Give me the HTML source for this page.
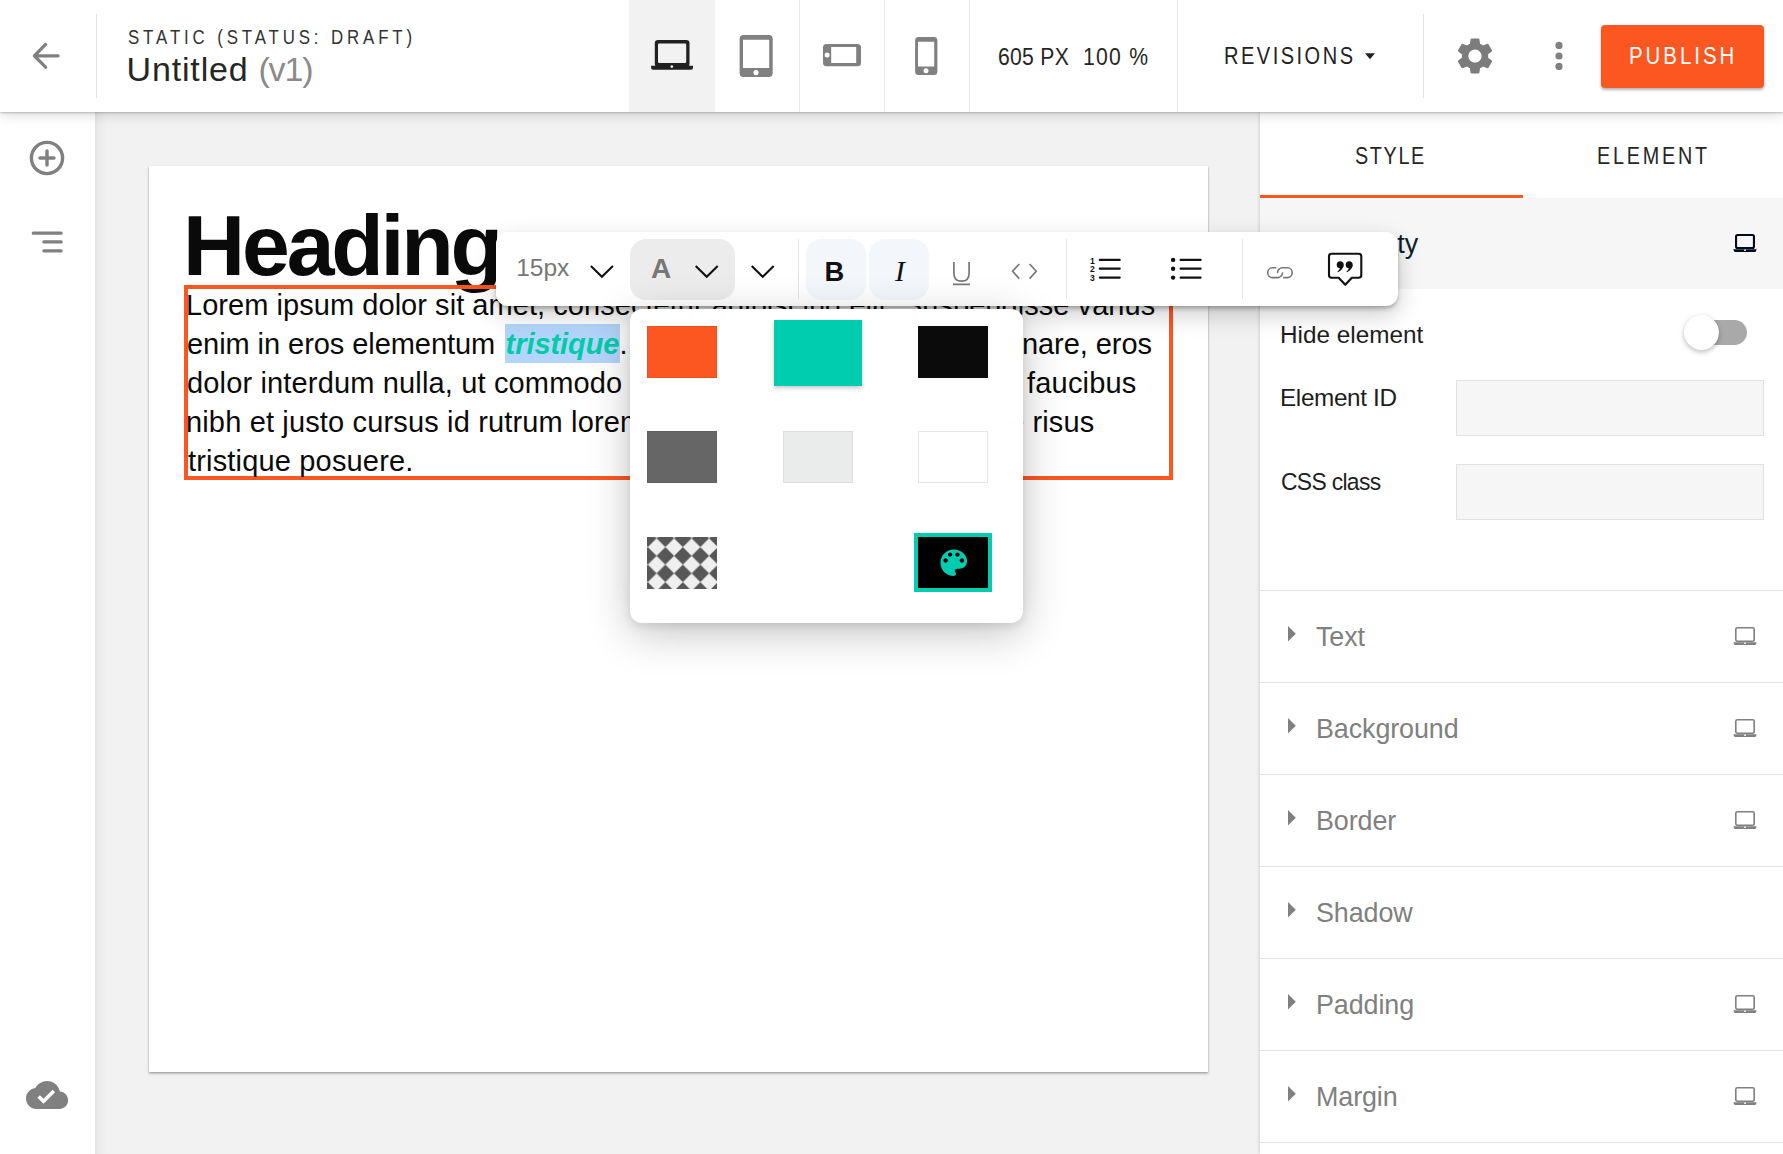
<!DOCTYPE html>
<html><head><meta charset="utf-8"><title>Editor</title>
<style>
html,body{margin:0;padding:0;width:1783px;height:1154px;overflow:hidden;background:#fff;}
body{position:relative;font-family:"Liberation Sans", sans-serif;}
.t{position:absolute;white-space:nowrap;line-height:0;}
.r{position:absolute;box-sizing:border-box;}
svg{position:absolute;overflow:visible;}
</style></head><body>
<div class="r" style="left:95px;top:112px;width:1165px;height:1042px;background:#f2f2f2;"></div>
<div class="r" style="left:95px;top:112px;width:15px;height:1042px;background:linear-gradient(to right,#e3e3e3,#eaeaea 20%,#eeeeee 45%,#f1f1f1 75%,#f2f2f2);"></div>
<div class="r" style="left:149px;top:166px;width:1059px;height:906px;background:#fff;box-shadow:0 1px 2px rgba(0,0,0,.3),0 2px 3px rgba(0,0,0,.12);"></div>
<div class="t" style="left:183.10px;top:245.30px;font-size:86px;color:#0a0a0a;font-weight:bold;letter-spacing:-3.2px;">Heading</div>
<div class="r" style="left:184px;top:285px;width:989px;height:195px;border:4px solid #fc5621;"></div>
<div class="r" style="left:505px;top:324px;width:115px;height:39px;background:#b4d5fb;"></div>
<div class="t" style="left:186.00px;top:304.75px;font-size:29px;color:#0a0a0a;letter-spacing:0.05px;">Lorem ipsum dolor sit amet, consectetur adipiscing elit. Suspendisse varius</div>
<div class="t" style="left:187.00px;top:343.75px;font-size:29px;color:#0a0a0a;letter-spacing:-0.06px;">enim in eros elementum <span style="letter-spacing:0">&#8202;</span><b style="font-style:italic;color:#00cba9">tristique</b>. Duis cursus, mi quis viverra ornare, eros</div>
<div class="t" style="left:187.00px;top:382.75px;font-size:29px;color:#0a0a0a;letter-spacing:0.155px;">dolor interdum nulla, ut commodo diam libero vitae erat. Aenean faucibus</div>
<div class="t" style="left:186.00px;top:421.75px;font-size:29px;color:#0a0a0a;letter-spacing:0.15px;">nibh et justo cursus id rutrum lorem imperdiet. Nunc ut sem vitae risus</div>
<div class="t" style="left:188.00px;top:460.75px;font-size:29px;color:#0a0a0a;letter-spacing:0.17px;">tristique posuere.</div>
<div class="r" style="left:0px;top:112px;width:95px;height:1042px;background:#fff;"></div>
<svg style="left:0;top:0" width="95" height="1154"><circle cx="47" cy="158" r="15.6" fill="none" stroke="#808080" stroke-width="3.4"/><path d="M40 158H54M47 151V165" stroke="#808080" stroke-width="3.4" stroke-linecap="round" fill="none"/><path d="M33.3 233.2H61.1M43.9 241.9H61.1M43.9 250.8H61.1" stroke="#808080" stroke-width="3.3" stroke-linecap="round" fill="none"/></svg>
<svg style="left:26px;top:1074px" width="42.1" height="42.1" viewBox="0 0 24 24"><path fill-rule="evenodd" fill="#808080" d="M19.35 10.04C18.67 6.59 15.64 4 12 4 9.11 4 6.6 5.64 5.35 8.04 2.34 8.36 0 10.91 0 14c0 3.31 2.69 6 6 6h13c2.76 0 5-2.24 5-5 0-2.64-2.05-4.78-4.65-4.96zM10 17l-3.5-3.5 1.41-1.41L10 14.17 15.18 9l1.41 1.41L10 17z"/></svg>
<div class="r" style="left:1260px;top:112px;width:523px;height:1042px;background:#fff;box-shadow:-1px 0 3px rgba(0,0,0,.13);"></div>
<div class="t" style="left:1355.14px;top:155.93px;font-size:23px;color:#262626;letter-spacing:1.92px;transform:scaleX(0.86);transform-origin:0 0;">STYLE</div>
<div class="t" style="left:1597.48px;top:156.03px;font-size:23px;color:#262626;letter-spacing:3.25px;transform:scaleX(0.86);transform-origin:0 0;">ELEMENT</div>
<div class="r" style="left:1260px;top:195px;width:263px;height:3px;background:#fc5621;"></div>
<div class="r" style="left:1260px;top:198px;width:523px;height:91px;background:#f6f6f6;"></div>
<div class="t" style="left:1317.00px;top:243.68px;font-size:26.9px;color:#0f1e2d;">Visibili</div>
<div class="t" style="left:1397.20px;top:243.68px;font-size:26.9px;color:#0f1e2d;">ty</div>
<svg style="left:1733.2px;top:233.9px" width="24" height="19" viewBox="0 0 24 19"><rect x="3.05" y="1.05" width="17.9" height="12.9" rx="1.5" fill="none" stroke="#000c18" stroke-width="2.1"/><path d="M0.3 15.2H23.7L22.8 17.6Q22.5 18 22 18H2Q1.5 18 1.2 17.6Z" fill="#000c18"/><rect x="11" y="15.6" width="2" height="1.2" fill="#fff"/></svg>
<div class="t" style="left:1280.00px;top:334.98px;font-size:24.3px;color:#1e1e1e;">Hide element</div>
<div class="r" style="left:1694px;top:320px;width:53px;height:25px;background:#a9a9a9;border-radius:12.5px;"></div>
<div class="r" style="left:1684px;top:315px;width:35px;height:35px;border-radius:50%;background:#fff;box-shadow:0 2px 5px rgba(0,0,0,.26),0 0 2px rgba(0,0,0,.06);"></div>
<div class="t" style="left:1280.00px;top:398.08px;font-size:24.3px;color:#1e1e1e;letter-spacing:-0.35px;">Element ID</div>
<div class="r" style="left:1456px;top:380px;width:308px;height:56px;background:#f6f6f6;border:1px solid #e2e2e2;"></div>
<div class="t" style="left:1281.00px;top:481.98px;font-size:24.3px;color:#1e1e1e;letter-spacing:-0.7px;transform:scaleX(0.94);transform-origin:0 0;">CSS class</div>
<div class="r" style="left:1456px;top:464px;width:308px;height:56px;background:#f6f6f6;border:1px solid #e2e2e2;"></div>
<div class="r" style="left:1260px;top:590px;width:523px;height:1px;background:#e6e6e6;"></div>
<div class="r" style="left:1260px;top:682px;width:523px;height:1px;background:#e6e6e6;"></div>
<div class="r" style="left:1260px;top:774px;width:523px;height:1px;background:#e6e6e6;"></div>
<div class="r" style="left:1260px;top:866px;width:523px;height:1px;background:#e6e6e6;"></div>
<div class="r" style="left:1260px;top:958px;width:523px;height:1px;background:#e6e6e6;"></div>
<div class="r" style="left:1260px;top:1050px;width:523px;height:1px;background:#e6e6e6;"></div>
<div class="r" style="left:1260px;top:1142px;width:523px;height:1px;background:#e6e6e6;"></div>
<svg style="left:1288px;top:626px" width="8" height="16"><path d="M0 0L7.8 7.8L0 15.6Z" fill="#808080"/></svg>
<div class="t" style="left:1316.00px;top:636.68px;font-size:26.9px;color:#808080;letter-spacing:-0.1px;">Text</div>
<svg style="left:1733.2px;top:627px" width="24" height="19" viewBox="0 0 24 19"><rect x="2.8" y="0.8" width="18.4" height="13.4" rx="1.5" fill="none" stroke="#808080" stroke-width="1.6"/><path d="M0.3 15.2H23.7L22.8 17.6Q22.5 18 22 18H2Q1.5 18 1.2 17.6Z" fill="#808080"/><rect x="11" y="15.6" width="2" height="1.2" fill="#fff"/></svg>
<svg style="left:1288px;top:718px" width="8" height="16"><path d="M0 0L7.8 7.8L0 15.6Z" fill="#808080"/></svg>
<div class="t" style="left:1316.00px;top:728.68px;font-size:26.9px;color:#808080;letter-spacing:-0.1px;">Background</div>
<svg style="left:1733.2px;top:719px" width="24" height="19" viewBox="0 0 24 19"><rect x="2.8" y="0.8" width="18.4" height="13.4" rx="1.5" fill="none" stroke="#808080" stroke-width="1.6"/><path d="M0.3 15.2H23.7L22.8 17.6Q22.5 18 22 18H2Q1.5 18 1.2 17.6Z" fill="#808080"/><rect x="11" y="15.6" width="2" height="1.2" fill="#fff"/></svg>
<svg style="left:1288px;top:810px" width="8" height="16"><path d="M0 0L7.8 7.8L0 15.6Z" fill="#808080"/></svg>
<div class="t" style="left:1316.00px;top:820.68px;font-size:26.9px;color:#808080;letter-spacing:-0.1px;">Border</div>
<svg style="left:1733.2px;top:811px" width="24" height="19" viewBox="0 0 24 19"><rect x="2.8" y="0.8" width="18.4" height="13.4" rx="1.5" fill="none" stroke="#808080" stroke-width="1.6"/><path d="M0.3 15.2H23.7L22.8 17.6Q22.5 18 22 18H2Q1.5 18 1.2 17.6Z" fill="#808080"/><rect x="11" y="15.6" width="2" height="1.2" fill="#fff"/></svg>
<svg style="left:1288px;top:902px" width="8" height="16"><path d="M0 0L7.8 7.8L0 15.6Z" fill="#808080"/></svg>
<div class="t" style="left:1316.00px;top:912.68px;font-size:26.9px;color:#808080;letter-spacing:-0.1px;">Shadow</div>
<svg style="left:1288px;top:994px" width="8" height="16"><path d="M0 0L7.8 7.8L0 15.6Z" fill="#808080"/></svg>
<div class="t" style="left:1316.00px;top:1004.68px;font-size:26.9px;color:#808080;letter-spacing:-0.1px;">Padding</div>
<svg style="left:1733.2px;top:995px" width="24" height="19" viewBox="0 0 24 19"><rect x="2.8" y="0.8" width="18.4" height="13.4" rx="1.5" fill="none" stroke="#808080" stroke-width="1.6"/><path d="M0.3 15.2H23.7L22.8 17.6Q22.5 18 22 18H2Q1.5 18 1.2 17.6Z" fill="#808080"/><rect x="11" y="15.6" width="2" height="1.2" fill="#fff"/></svg>
<svg style="left:1288px;top:1086px" width="8" height="16"><path d="M0 0L7.8 7.8L0 15.6Z" fill="#808080"/></svg>
<div class="t" style="left:1316.00px;top:1096.68px;font-size:26.9px;color:#808080;letter-spacing:-0.1px;">Margin</div>
<svg style="left:1733.2px;top:1087px" width="24" height="19" viewBox="0 0 24 19"><rect x="2.8" y="0.8" width="18.4" height="13.4" rx="1.5" fill="none" stroke="#808080" stroke-width="1.6"/><path d="M0.3 15.2H23.7L22.8 17.6Q22.5 18 22 18H2Q1.5 18 1.2 17.6Z" fill="#808080"/><rect x="11" y="15.6" width="2" height="1.2" fill="#fff"/></svg>
<div class="r" style="left:0px;top:0px;width:1783px;height:112px;background:#fff;box-shadow:0 1px 2px rgba(0,0,0,.22),0 3px 12px rgba(0,0,0,.14);z-index:5;"></div>
<div style="position:absolute;left:0;top:0;width:1783px;height:112px;z-index:6;">
<svg style="left:0;top:0" width="100" height="112"><path d="M35 55.8H58.1M45.6 44.4L34.4 55.8L45.6 67.2" stroke="#808080" stroke-width="3.3" stroke-linecap="round" stroke-linejoin="round" fill="none"/></svg>
<div class="r" style="left:96px;top:14px;width:1px;height:84px;background:#e3e3e3;"></div>
<div class="t" style="left:127.54px;top:36.81px;font-size:19.6px;color:#333;letter-spacing:4.5px;transform:scaleX(0.86);transform-origin:0 0;">STATIC (STATUS: DRAFT)</div>
<div class="t" style="left:126.50px;top:68.82px;font-size:34px;color:#262626;letter-spacing:0.85px;">Untitled</div>
<div class="t" style="left:258.50px;top:68.82px;font-size:34px;color:#8a8a8a;letter-spacing:-1.2px;">(v1)</div>
<div class="r" style="left:629px;top:0px;width:86px;height:112px;background:#f2f2f2;"></div>
<div class="r" style="left:799px;top:0px;width:1px;height:112px;background:#ececec;"></div>
<div class="r" style="left:884px;top:0px;width:1px;height:112px;background:#ececec;"></div>
<div class="r" style="left:969px;top:0px;width:1px;height:112px;background:#ececec;"></div>
<div class="r" style="left:1177px;top:0px;width:1px;height:112px;background:#ececec;"></div>
<svg style="left:0;top:0" width="1000" height="112"><path d="M658.0999999999999 40H686.2Q689.5 40 689.5 43.3V63.7Q689.5 67 686.2 67H658.0999999999999Q654.8 67 654.8 63.7V43.3Q654.8 40 658.0999999999999 40ZM659.2 43.5H685.0Q686.2 43.5 686.2 44.7V61.8Q686.2 63 685.0 63H659.2Q658 63 658 61.8V44.7Q658 43.5 659.2 43.5Z" fill="#222" fill-rule="evenodd"/><path d="M651.1 65.7H693V67.7Q693 69.7 691 69.7H653.1Q651.1 69.7 651.1 67.7Z" fill="#222"/><circle cx="671.8" cy="66.6" r="1.3" fill="#f2f2f2"/><path d="M743.6 34.9H768.7Q772.7 34.9 772.7 38.9V73Q772.7 77 768.7 77H743.6Q739.6 77 739.6 73V38.9Q739.6 34.9 743.6 34.9ZM743.1 39.8H769.1Q769.2 39.8 769.2 39.9V68.0Q769.2 68.1 769.1 68.1H743.1Q743 68.1 743 68.0V39.9Q743 39.8 743.1 39.8Z" fill="#808080" fill-rule="evenodd"/><circle cx="756" cy="72.6" r="2.6" fill="#fff"/><path d="M826.5 44H857.5Q861 44 861 47.5V62.8Q861 66.3 857.5 66.3H826.5Q823 66.3 823 62.8V47.5Q823 44 826.5 44ZM831.3000000000001 46.9H856.1Q856.2 46.9 856.2 47.0V62.9Q856.2 63 856.1 63H831.3000000000001Q831.2 63 831.2 62.9V47.0Q831.2 46.9 831.3000000000001 46.9Z" fill="#808080" fill-rule="evenodd"/><circle cx="827.1" cy="55" r="2.5" fill="#fff"/><path d="M918.6 36.9H933.9Q937.4 36.9 937.4 40.4V71.4Q937.4 74.9 933.9 74.9H918.6Q915.1 74.9 915.1 71.4V40.4Q915.1 36.9 918.6 36.9ZM918.1 41.8H934.1Q934.2 41.8 934.2 41.9V66.4Q934.2 66.5 934.1 66.5H918.1Q918 66.5 918 66.4V41.9Q918 41.8 918.1 41.8Z" fill="#808080" fill-rule="evenodd"/><circle cx="926" cy="70.8" r="2.5" fill="#fff"/></svg>
<div class="t" style="left:997.58px;top:57.03px;font-size:23px;color:#262626;letter-spacing:0.3px;transform:scaleX(0.92);transform-origin:0 0;">605 PX</div>
<div class="t" style="left:1083.06px;top:57.03px;font-size:23px;color:#262626;letter-spacing:1.37px;transform:scaleX(0.92);transform-origin:0 0;">100 %</div>
<div class="t" style="left:1223.88px;top:55.93px;font-size:23.3px;color:#222;letter-spacing:2.89px;transform:scaleX(0.86);transform-origin:0 0;">REVISIONS</div>
<svg style="left:1365px;top:53px" width="11" height="7"><path d="M0 0.3H10L5 6.3Z" fill="#222"/></svg>
<div class="r" style="left:1423px;top:14px;width:1px;height:84px;background:#e3e3e3;"></div>
<svg style="left:1453px;top:34px" width="44" height="44" viewBox="0 0 24 24"><path d="M19.14,12.94c0.04-0.3,0.06-0.61,0.06-0.94c0-0.32-0.02-0.64-0.07-0.94l2.03-1.58c0.18-0.14,0.23-0.41,0.12-0.61 l-1.92-3.32c-0.12-0.22-0.37-0.29-0.59-0.22l-2.39,0.96c-0.5-0.38-1.03-0.7-1.62-0.94L14.4,2.81c-0.04-0.24-0.24-0.41-0.48-0.41 h-3.84c-0.24,0-0.43,0.17-0.47,0.41L9.25,5.35C8.66,5.59,8.12,5.92,7.63,6.29L5.24,5.33c-0.22-0.08-0.47,0-0.59,0.22L2.74,8.87 C2.62,9.08,2.66,9.34,2.86,9.48l2.03,1.58C4.84,11.36,4.8,11.69,4.8,12s0.02,0.64,0.07,0.94l-2.03,1.58 c-0.18,0.14-0.23,0.41-0.12,0.61l1.92,3.32c0.12,0.22,0.37,0.29,0.59,0.22l2.39-0.96c0.5,0.38,1.03,0.7,1.62,0.94l0.36,2.54 c0.05,0.24,0.24,0.41,0.48,0.41h3.84c0.24,0,0.44-0.17,0.47-0.41l0.36-2.54c0.59-0.24,1.13-0.56,1.62-0.94l2.39,0.96 c0.22,0.08,0.47,0,0.59-0.22l1.92-3.32c0.12-0.22,0.07-0.47-0.12-0.61L19.14,12.94z M12,15.6c-1.98,0-3.6-1.62-3.6-3.6 s1.62-3.6,3.6-3.6s3.6,1.62,3.6,3.6S13.98,15.6,12,15.6z" fill="#7c7c7c"/></svg>
<svg style="left:1550px;top:38px" width="20" height="36"><circle cx="9" cy="7.4" r="3.6" fill="#808080"/><circle cx="9" cy="18" r="3.6" fill="#808080"/><circle cx="9" cy="28.4" r="3.6" fill="#808080"/></svg>
<div class="r" style="left:1601px;top:25px;width:163px;height:63px;background:#fc5621;border-radius:4px;box-shadow:0 2px 3px rgba(0,0,0,.3);"></div>
<div class="t" style="left:1628.88px;top:55.69px;font-size:23.7px;color:#fff;letter-spacing:3.49px;transform:scaleX(0.86);transform-origin:0 0;">PUBLISH</div>
</div>
<div class="r" style="left:629.7px;top:308.6px;width:393.3px;height:314.4px;background:#fff;border-radius:12px;box-shadow:0 3px 8px rgba(0,0,0,.1),0 10px 44px rgba(0,0,0,.24);z-index:22;"></div>
<div style="position:absolute;left:0;top:0;z-index:23;">
<div class="r" style="left:647px;top:326px;width:70px;height:52px;background:#fc5621;border:1px solid rgba(0,0,0,.06);"></div>
<div class="r" style="left:774px;top:319.5px;width:87.5px;height:66.5px;background:#00cdb0;box-shadow:0 2px 4px rgba(0,0,0,.22);"></div>
<div class="r" style="left:918px;top:326px;width:70px;height:52px;background:#0b0b0b;"></div>
<div class="r" style="left:647px;top:431px;width:70px;height:52px;background:#666;border:1px solid rgba(0,0,0,.06);"></div>
<div class="r" style="left:782.7px;top:431px;width:70.29999999999995px;height:52px;background:#eaebeb;border:1px solid #dedede;"></div>
<div class="r" style="left:918px;top:431px;width:70px;height:52px;background:#fff;border:1px solid #e6e6e6;"></div>
<svg style="left:647px;top:536.5px" width="70" height="52" viewBox="647 536.5 70 52"><defs><pattern id="chk" patternUnits="userSpaceOnUse" x="647.85" y="537.85" width="17.5" height="17.5"><rect width="17.5" height="17.5" fill="#575757"/><path d="M8.75 0L17.5 8.75L8.75 17.5L0 8.75Z" fill="#efefef"/></pattern></defs><rect x="647" y="536.5" width="70" height="52" fill="url(#chk)"/></svg>
<div class="r" style="left:914px;top:532.5px;width:77.5px;height:59.5px;background:#00cdb0;"></div>
<div class="r" style="left:918px;top:536.5px;width:69.5px;height:51.5px;background:#000;"></div>
<svg style="left:935.8px;top:545.1px" width="35.5" height="35.5" viewBox="0 0 24 24"><path d="M12 3c-4.97 0-9 4.03-9 9s4.03 9 9 9c.83 0 1.5-.67 1.5-1.5 0-.39-.15-.74-.39-1.01-.23-.26-.38-.61-.38-.99 0-.83.67-1.5 1.5-1.5H16c2.76 0 5-2.24 5-5 0-4.42-4.03-8-9-8zm-5.5 9c-.83 0-1.5-.67-1.5-1.5S5.67 9 6.5 9 8 9.67 8 10.5 7.33 12 6.5 12zm3-4C8.67 8 8 7.33 8 6.5S8.67 5 9.5 5s1.5.67 1.5 1.5S10.33 8 9.5 8zm5 0c-.83 0-1.5-.67-1.5-1.5S13.67 5 14.5 5s1.5.67 1.5 1.5S15.33 8 14.5 8zm3 4c-.83 0-1.5-.67-1.5-1.5S16.67 9 17.5 9s1.5.67 1.5 1.5-.67 1.5-1.5 1.5z" fill="#00cdb0"/></svg>
</div>
<div class="r" style="left:496px;top:231.5px;width:901.5px;height:74.5px;background:#fff;border-radius:12px;box-shadow:0 3px 5px -1px rgba(0,0,0,.32),0 9px 24px rgba(0,0,0,.2);z-index:20;"></div>
<div style="position:absolute;left:0;top:0;z-index:21;">
<div class="t" style="left:516.20px;top:268.21px;font-size:24.5px;color:#777;">15px</div>
<div class="r" style="left:630px;top:238.5px;width:105px;height:61.0px;background:#ececec;border-radius:16px;"></div>
<div class="r" style="left:806px;top:238.5px;width:59.60000000000002px;height:61.0px;background:#f3f6fb;border-radius:16px;"></div>
<div class="r" style="left:869px;top:238.5px;width:59.700000000000045px;height:61.0px;background:#f3f6fb;border-radius:16px;"></div>
<div class="r" style="left:798px;top:239px;width:1px;height:60px;background:#e6e6e6;"></div>
<div class="r" style="left:1066px;top:239px;width:1px;height:60px;background:#e6e6e6;"></div>
<div class="r" style="left:1242px;top:239px;width:1px;height:60px;background:#e6e6e6;"></div>
<div class="t" style="left:650.90px;top:268.70px;font-size:28px;color:#777;font-weight:bold;">A</div>
<div class="t" style="left:824.60px;top:271.84px;font-size:27.3px;color:#111;font-weight:bold;">B</div>
<div class="t" style="left:894.90px;top:271.34px;font-size:29.5px;color:#111;font-style:italic;font-family:'Liberation Serif', serif;">I</div>
<svg style="left:0;top:0" width="1400" height="320"><path d="M590.9 266L601.9 276.7L612.9 266" stroke="#111" stroke-width="2.1" fill="none"/><path d="M695.7 266L706.7 276.7L717.7 266" stroke="#111" stroke-width="2.1" fill="none"/><path d="M751.7 266L762.7 276.7L773.7 266" stroke="#111" stroke-width="2.1" fill="none"/><path d="M953.9 262V273.5Q953.9 281.2 961.5 281.2Q969.1 281.2 969.1 273.5V262M953 284.3H970" stroke="#777" stroke-width="1.7" fill="none"/><path d="M1019.2 264L1012.6 271.3L1019.2 278.6M1029.6 264L1036.2 271.3L1029.6 278.6" stroke="#777" stroke-width="1.7" fill="none"/><path d="M1099.8 259.9H1119.7M1099.8 268.7H1119.7M1099.8 277.6H1119.7" stroke="#111" stroke-width="2.2" stroke-linecap="round"/><text x="1092.3" y="263.8" font-family="Liberation Sans" font-weight="bold" font-size="8.6" text-anchor="middle" fill="#111">1</text><text x="1092.3" y="272.1" font-family="Liberation Sans" font-weight="bold" font-size="8.6" text-anchor="middle" fill="#111">2</text><text x="1092.3" y="281.1" font-family="Liberation Sans" font-weight="bold" font-size="8.6" text-anchor="middle" fill="#111">3</text><path d="M1180.6 259.9H1200.6M1180.6 268.7H1200.6M1180.6 277.6H1200.6" stroke="#111" stroke-width="2.2" stroke-linecap="round"/><circle cx="1173.1" cy="259.9" r="2.2" fill="#111"/><circle cx="1173.1" cy="268.7" r="2.2" fill="#111"/><circle cx="1173.1" cy="277.6" r="2.2" fill="#111"/><path d="M1276.3 267.8H1272.6A4.9 4.9 0 0 0 1272.6 277.6H1277.6A4.9 4.9 0 0 0 1282.5 272.4M1283.2 277.6H1287.3A4.9 4.9 0 0 0 1287.3 267.8H1282.4A4.9 4.9 0 0 0 1277.5 273" stroke="#777" stroke-width="1.6" fill="none"/><path d="M1331.6 253.8H1358.6Q1361.3 253.8 1361.3 256.5V275Q1361.3 277.7 1358.6 277.7H1351.8L1345.3 284.8L1338.6 277.7H1331.6Q1329 277.7 1329 275V256.5Q1329 253.8 1331.6 253.8Z" stroke="#111" stroke-width="2.1" fill="none" stroke-linejoin="round"/><circle cx="1340.2" cy="264.7" r="3.5" fill="#111"/><path d="M1343.6000000000001 265Q1343.4 269.5 1337.9 272.3L1337.4 271.5Q1339.7 269.5 1340.2 267.5Z" fill="#111"/><circle cx="1349.2" cy="264.7" r="3.5" fill="#111"/><path d="M1352.6000000000001 265Q1352.4 269.5 1346.9 272.3L1346.4 271.5Q1348.7 269.5 1349.2 267.5Z" fill="#111"/></svg>
</div>
</body></html>
